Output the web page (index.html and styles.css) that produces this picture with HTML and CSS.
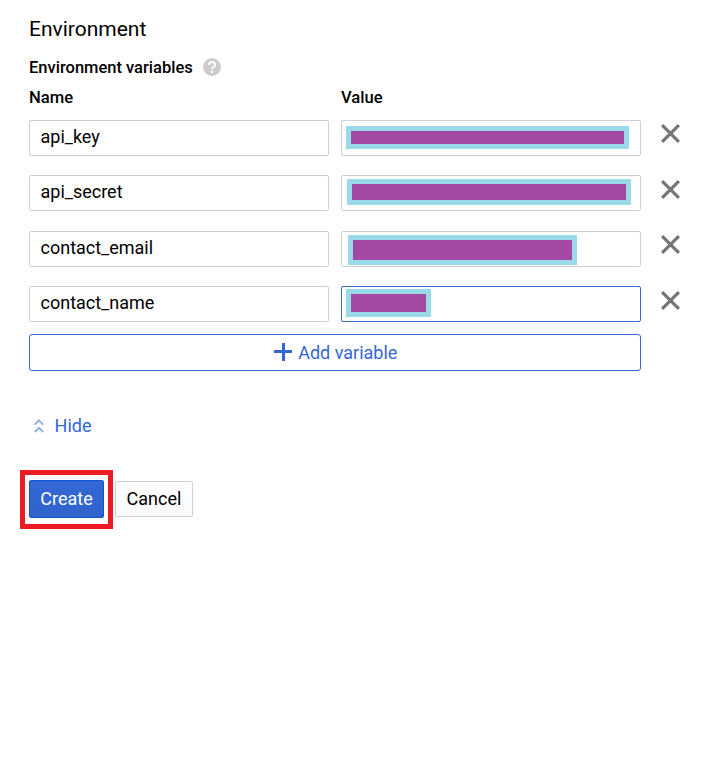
FILE: index.html
```html
<!DOCTYPE html>
<html lang="en">
<head>
<meta charset="utf-8">
<title>Environment</title>
<link rel="stylesheet" href="styles.css">
</head>
<body>
<svg class="defs" width="0" height="0">
  <symbol id="close" viewBox="0 0 19 19"><path d="M1.1 1.1 17.9 17.9M17.9 1.1 1.1 17.9" fill="none" stroke="#757575" stroke-width="3.2"/></symbol>
</svg>
<main class="panel">
  <h1 class="title">Environment</h1>
  <div class="subtitle">
    <span>Environment variables</span>
    <svg class="help" viewBox="0 0 24 24"><circle cx="12" cy="12" r="12" fill="#ccc"/><path d="M8 9.3a4 4 0 0 1 8 0c0 2.7-4 2.8-4 5.9" fill="none" stroke="#fff" stroke-width="2.7"/><path d="M10.6 17.3h2.8v2.8h-2.8z" fill="#fff"/></svg>
  </div>
  <div class="row heads"><span>Name</span><span>Value</span></div>
  <div class="rows">
    <div class="row">
      <div class="field">api_key</div>
      <div class="field"><span class="mask mask-key"></span></div>
      <svg class="remove"><use href="#close"/></svg>
    </div>
    <div class="row">
      <div class="field">api_secret</div>
      <div class="field"><span class="mask mask-secret"></span></div>
      <svg class="remove low"><use href="#close"/></svg>
    </div>
    <div class="row">
      <div class="field">contact_email</div>
      <div class="field"><span class="mask mask-email"></span></div>
      <svg class="remove"><use href="#close"/></svg>
    </div>
    <div class="row">
      <div class="field">contact_name</div>
      <div class="field focused"><span class="mask mask-name"></span></div>
      <svg class="remove low"><use href="#close"/></svg>
    </div>
  </div>
  <div class="add">
    <svg class="plus" viewBox="0 0 18 18"><path d="M9.5 0v18M0 8.5h18" stroke="#3367d6" stroke-width="3"/></svg>
    <span>Add variable</span>
  </div>
  <div class="hide">
    <svg class="chevrons" viewBox="0 0 10 14"><path d="M.8 5.6 5 1.4l4.2 4.2M.8 13 5 8.8 9.2 13" fill="none" stroke="#93afe9" stroke-width="1.9"/></svg>
    <span>Hide</span>
  </div>
  <div class="actions">
    <div class="highlight"><div class="button create">Create</div></div>
    <div class="button cancel">Cancel</div>
  </div>
</main>
</body>
</html>
```
FILE: styles.css
```css
* { box-sizing: border-box; }
body {
  margin: 0;
  background: #fff;
  color: #000;
  font: 18px/24px Roboto, sans-serif;
}
.defs { position: absolute; }
.panel { padding: 15px 0 0 29px; }
.title { margin: 0; font-size: 21px; line-height: 28px; font-weight: 400; }
.subtitle {
  display: flex;
  align-items: center;
  gap: 10px;
  height: 24px;
  margin-top: 12px;
  font-size: 16.5px;
  font-weight: 500;
}
.subtitle span { padding-top: 2px; }
.help { width: 18px; height: 18px; }
.row {
  display: grid;
  grid-template-columns: 300px 300px 27px;
  column-gap: 12px;
}
.heads { margin-top: 7px; height: 23px; font-size: 16.6px; line-height: 24px; font-weight: 500; }
.rows { display: grid; grid-template-rows: 36px 36px 36px 36px; row-gap: 19.4px; margin-top: 11px; }
.field {
  height: 36px;
  padding: 4px 10.5px;
  border: 1px solid #d0d0d0;
  border-radius: 2px;
}
.field.focused { border-color: #3367d6; }
.field:has(.mask) { padding: 0; }
.mask { display: block; border: 5px solid #99d9ea; background: #a349a4; }
.mask-key { width: 283px; height: 23px; margin: 5px 0 0 4px; }
.mask-secret { width: 284px; height: 26px; margin: 3px 0 0 5px; }
.mask-email { width: 229px; height: 30px; margin: 3px 0 0 6px; }
.mask-name { width: 85px; height: 28px; margin: 2px 0 0 4px; }
.remove { width: 19px; height: 19px; margin: 4px 0 0 8px; }
.remove.low { margin-top: 5px; }
.add {
  display: flex;
  justify-content: center;
  align-items: center;
  gap: 6px;
  width: 612px;
  height: 37px;
  margin-top: 12px;
  padding-left: 1.5px;
  border: 1px solid #3367d6;
  border-radius: 3px;
  color: #3367d6;
}
.plus { width: 18px; height: 18px; margin-top: -1px; }
.hide {
  display: flex;
  align-items: center;
  gap: 10.6px;
  margin: 43px 0 0 5px;
  color: #3367d6;
}
.chevrons { width: 10px; height: 14px; }
.actions { display: flex; align-items: flex-start; gap: 2px; margin: 32px 0 0 -9px; }
.highlight { width: 93px; height: 59px; padding: 5px 4px; border: 5px solid #ed1c24; }
.button { border: 1px solid; border-radius: 2px; text-align: center; }
.create {
  width: 75px;
  height: 38px;
  line-height: 36px;
  border-color: #1155cc;
  background: linear-gradient(#3367d6, #3063cb);
  color: #fff;
}
.cancel {
  width: 78px;
  height: 36px;
  margin-top: 11px;
  line-height: 34px;
  border-color: #d0d0d0;
  background: linear-gradient(#fff, #fafafa);
}
```
